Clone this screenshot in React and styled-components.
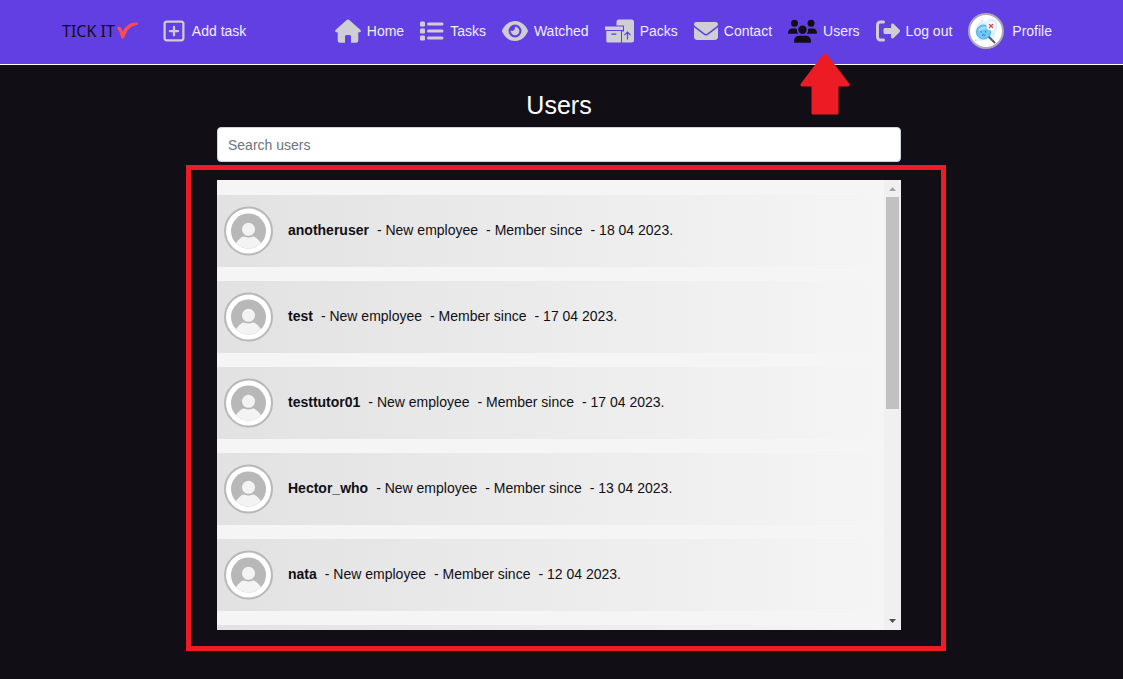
import React from "react";
import styled, { createGlobalStyle } from "styled-components";
import {
  FaEye,
  FaEnvelope,
  FaRightFromBracket,
  FaRegSquarePlus,
} from "react-icons/fa6";

const GlobalStyle = createGlobalStyle`
  *, *::before, *::after { box-sizing: border-box; }
  body {
    margin: 0;
    background: #110f15;
    color: #fff;
    font: 14px/20px "Liberation Sans", Arial, sans-serif;
  }
`;

const Header = styled.header`
  display: flex;
  align-items: center;
  min-height: 65px;
  padding: 0 71px 2px 62px;
  background: #623fe3;
  border-bottom: 1px solid #fff;
`;

const Logo = styled.a`
  display: flex;
  align-items: center;
  gap: 2px;
  color: #110f15;
  text-decoration: none;
  font: 16px/24px "Noto Sans", sans-serif;
  white-space: nowrap;
`;

const Nav = styled.nav`
  display: flex;
  align-items: center;
  flex: 1;
  gap: 16px;
  margin-left: 24px;
`;

const NavLink = styled.a`
  position: relative;
  display: flex;
  align-items: center;
  gap: 6px;
  margin-right: ${(p) => (p.$first ? "auto" : "0")};
  color: #f1eefc;
  text-decoration: none;
  white-space: nowrap;
`;

const NavIcon = styled.span`
  display: flex;
  color: ${(p) => (p.$active ? "#110f15" : "#cfced3")};
`;

const ProfilePicture = styled.span`
  display: flex;
  width: 36px;
  height: 36px;
  margin-right: 2px;
  border: 2px solid #aaa8b4;
  border-radius: 50%;
  background: #fff;
  overflow: hidden;
`;

const Pointer = styled.svg`
  position: absolute;
  top: 34px;
  left: 12px;
`;

const Main = styled.main`
  padding: 25px 5px 24px 0;
`;

const Column = styled.div`
  width: 100%;
  max-width: 684px;
  margin: 0 auto;
`;

const Title = styled.h1`
  margin: 0 0 7px;
  font-size: 25px;
  line-height: 30px;
  font-weight: 400;
  text-align: center;
`;

const SearchInput = styled.input`
  display: block;
  width: 100%;
  height: 35px;
  padding: 0 10px;
  border: 1px solid #ced4da;
  border-radius: 4px;
  background: #fff;
  color: #212529;
  font: inherit;
  &::placeholder { color: #6c757d; opacity: 1; }
`;

const Panel = styled.section`
  position: relative;
  display: flex;
  height: 450px;
  margin-top: 18px;
  background: #f5f5f5;
`;

const Highlight = styled.div`
  position: absolute;
  inset: -15px -45px -21px -31px;
  border: 5px solid #ed1c24;
  pointer-events: none;
`;

const UserList = styled.ul`
  display: flex;
  flex-direction: column;
  gap: 14px;
  flex: 1;
  margin: 0;
  padding: 15px 0 0;
  list-style: none;
  overflow-y: auto;
  scrollbar-width: none;
`;

const UserRow = styled.li`
  display: flex;
  align-items: center;
  gap: 15px;
  flex: none;
  min-height: 72px;
  padding: 0 7px;
  background: linear-gradient(to right, #e2e2e2, #f5f5f5);
  color: #110f15;
`;

const UserText = styled.p`
  display: flex;
  flex-wrap: wrap;
  gap: 0 8px;
  margin: 0 0 2px;
`;

const Scrollbar = styled.div`
  display: flex;
  flex-direction: column;
  justify-content: space-between;
  width: 17px;
  background: #f0f0f0;
`;

const ScrollArrow = styled.svg`
  display: block;
  flex: none;
  fill: ${(p) => (p.$dim ? "#a3a3a3" : "#505050")};
`;

const ScrollTrack = styled.div`
  flex: 1;
  padding: 0 2px;
`;

const ScrollThumb = styled.div`
  height: 51%;
  background: #c1c1c1;
`;

function Tick() {
  return (
    <svg width="21" height="18" viewBox="0 0 21 18" aria-hidden="true">
      <path
        d="M.5 6.2Q.2 4.600 2 4.500Q4 4.700 5.700 9.500C8.500 4 13 .6 19.500 .6C21.500 .9 21.400 2.900 19.700 3.100C13.500 3.800 10.200 8 7.200 15.500Q5.700 18.200 4.300 15.500Q3 9.800.5 6.200Z"
        fill="#ff4b50"
      />
    </svg>
  );
}

function HomeIcon() {
  return (
    <svg width="26" height="24" viewBox="0 0 26 24" fill="currentColor" aria-hidden="true">
      <path d="M11.700 1Q13 0 14.300 1L25.500 11Q26.500 12.700 25 13.200H23.300V21.500Q23.300 23.800 21 23.800H16V17.500Q16 16 14.500 16H11.500Q10 16 10 17.500V23.800H5Q2.700 23.800 2.700 21.500V13.200H1Q-.5 12.700 .5 11Z" />
    </svg>
  );
}

function TasksIcon() {
  return (
    <svg width="24" height="24" viewBox="0 0 24 24" fill="currentColor" aria-hidden="true">
      <rect x="0" y="2.500" width="5" height="5" rx="1.300" />
      <rect x="0" y="9.500" width="5" height="5" rx="1.300" />
      <rect x="0" y="16.500" width="5" height="5" rx="1.300" />
      <rect x="7" y="3.500" width="16.500" height="3" rx="1.500" />
      <rect x="7" y="10.500" width="16.500" height="3" rx="1.500" />
      <rect x="7" y="17.500" width="16.500" height="3" rx="1.500" />
    </svg>
  );
}

function PacksIcon() {
  return (
    <svg width="29" height="24" viewBox="0 0 29 24" aria-hidden="true">
      <path
        d="M11.500 6.500V3Q11.500 .5 14 .5H26.500Q29 .5 29 3V21Q29 23.500 26.500 23.500H17V12.500H19V6.500Z"
        fill="currentColor"
      />
      <path d="M0 7.500H18V11H0ZM1.300 12H16V23.500H3Q1.300 23.500 1.300 22Z" fill="currentColor" />
      <path d="M6.300 15.200H11.300M22.500 20.500V13.500M19.500 16.200L22.500 13.200L25.500 16.200" fill="none" stroke="#623fe3" strokeWidth="1.200" />
    </svg>
  );
}

function UsersIcon() {
  return (
    <svg width="29" height="24" viewBox="0 0 29 24" fill="currentColor" aria-hidden="true">
      <circle cx="6.500" cy="4.200" r="3.500" />
      <circle cx="23" cy="4.200" r="3.500" />
      <circle cx="14.500" cy="10.700" r="4.200" />
      <path d="M0 14.200Q0 9.500 4.500 9.500H7.500L9 10Q8.300 12.500 10 14.700H.5Q0 14.700 0 14.200ZM29 14.200Q29 9.500 24.500 9.500H21.500L20 10Q20.700 12.500 19 14.700H28.500Q29 14.700 29 14.200ZM6 22.500Q6 16.800 11.500 16.800H17.500Q23 16.800 23 22.500Q23 23.700 22 23.700H7Q6 23.700 6 22.500Z" />
    </svg>
  );
}

function SearchPicture() {
  return (
    <svg width="32" height="32" viewBox="0 0 32 32" aria-hidden="true">
      <path d="M7 10Q10 5 16 7Q21 1 26 6Q29 12 25 18Q24 25 16 25Q8 28 6 20Q4 15 7 10Z" fill="#d9f1fc" />
      <path d="M19 22L24.500 27.500" stroke="#555b66" strokeWidth="2" strokeLinecap="round" />
      <circle cx="13.500" cy="17" r="7" fill="#72c6f5" stroke="#4faee5" />
      <path d="M9 14Q14 9 18 14Q13 13 9 17Z" fill="#a4dcfa" />
      <path d="M11 16V17.500M15.500 16V17.500M12 20.500Q13.500 19 15 20.500" fill="none" stroke="#2d699d" />
      <circle cx="21" cy="11" r="4.500" fill="#fff" />
      <path d="M19 9L23 13M23 9L19 13" stroke="#dc4248" strokeWidth="1.300" />
      <path d="M11 5.500H12.500M5 25H7" stroke="#91d4f5" />
    </svg>
  );
}

function Avatar() {
  return (
    <svg width="49" height="50" viewBox="0 0 49 50" aria-hidden="true">
      <circle cx="24.500" cy="25" r="23.500" fill="#fff" stroke="#b8b8b8" strokeWidth="2" />
      <clipPath id="face">
        <circle cx="24.500" cy="25" r="17.500" />
      </clipPath>
      <g clipPath="url(#face)">
        <rect x="7" y="7" width="35" height="36" fill="#b8b8b8" />
        <circle cx="24.500" cy="23.300" r="6.500" fill="#f3f3f3" />
        <path d="M10 40Q16 30.500 20 30.500Q24.500 32.500 29 30.500Q33 30.500 39 40V44H10Z" fill="#f3f3f3" />
      </g>
    </svg>
  );
}

const links = [
  { label: "Add task", icon: <FaRegSquarePlus size={24} />, first: true },
  { label: "Home", icon: <HomeIcon /> },
  { label: "Tasks", icon: <TasksIcon /> },
  { label: "Watched", icon: <FaEye size={26} /> },
  { label: "Packs", icon: <PacksIcon /> },
  { label: "Contact", icon: <FaEnvelope size={24} /> },
  { label: "Users", icon: <UsersIcon />, active: true },
  { label: "Log out", icon: <FaRightFromBracket size={24} /> },
];

const users = [
  { name: "anotheruser", since: "18 04 2023." },
  { name: "test", since: "17 04 2023." },
  { name: "testtutor01", since: "17 04 2023." },
  { name: "Hector_who", since: "13 04 2023." },
  { name: "nata", since: "12 04 2023." },
];

export default function App() {
  return (
    <>
      <GlobalStyle />
      <Header>
        <Logo href="#">
          TICK IT
          <Tick />
        </Logo>
        <Nav>
          {links.map(({ label, icon, first, active }) => (
            <NavLink key={label} href="#" $first={first}>
              <NavIcon $active={active}>{icon}</NavIcon>
              {label}
              {active && (
                <Pointer width="50" height="62" viewBox="0 0 50 62" aria-hidden="true">
                  <path
                    d="M23 1.500Q25 0 27 1.500L49.500 31Q50 33 48 33.500H38.500V60Q38.500 61.500 37 61.500H13Q11.500 61.500 11.500 60V33.500H2Q0 33 .5 31Z"
                    fill="#ed1c24"
                  />
                </Pointer>
              )}
            </NavLink>
          ))}
          <NavLink href="#">
            <ProfilePicture>
              <SearchPicture />
            </ProfilePicture>
            Profile
          </NavLink>
        </Nav>
      </Header>
      <Main>
        <Column>
          <Title>Users</Title>
          <SearchInput type="search" placeholder="Search users" aria-label="Search users" />
          <Panel>
            <UserList>
              {users.map(({ name, since }) => (
                <UserRow key={name}>
                  <Avatar />
                  <UserText>
                    <b>{name}</b>
                    <span>- New employee</span>
                    <span>- Member since</span>
                    <span>- {since}</span>
                  </UserText>
                </UserRow>
              ))}
              <UserRow />
            </UserList>
            <Scrollbar aria-hidden="true">
              <ScrollArrow $dim width="17" height="17" viewBox="0 0 17 17">
                <path d="M5 11L8.500 7L12 11Z" />
              </ScrollArrow>
              <ScrollTrack>
                <ScrollThumb />
              </ScrollTrack>
              <ScrollArrow width="17" height="17" viewBox="0 0 17 17">
                <path d="M5 6L8.500 10L12 6Z" />
              </ScrollArrow>
            </Scrollbar>
            <Highlight />
          </Panel>
        </Column>
      </Main>
    </>
  );
}
